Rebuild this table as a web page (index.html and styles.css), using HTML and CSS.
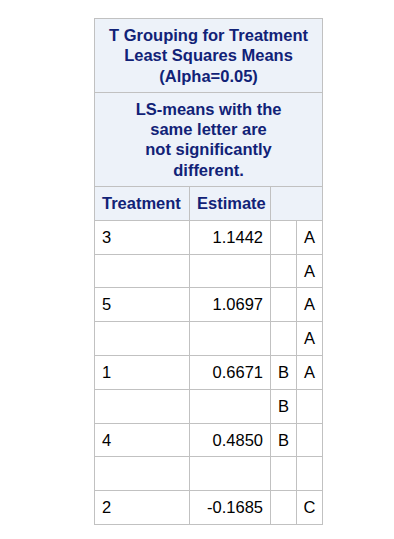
FILE: index.html
```html
<!DOCTYPE html>
<html>
<head>
<meta charset="utf-8">
<link rel="stylesheet" href="styles.css">
</head>
<body>
<table class="grp">
  <colgroup>
    <col class="c1"><col class="c2"><col class="c3"><col class="c4">
  </colgroup>
  <thead>
    <tr><th class="title" colspan="4">T Grouping for Treatment<br>Least Squares Means<br>(Alpha=0.05)</th></tr>
    <tr><th class="title" colspan="4">LS-means with the<br>same letter are<br>not significantly<br>different.</th></tr>
    <tr><th class="hdr">Treatment</th><th class="hdr">Estimate</th><th class="hdr" colspan="2"></th></tr>
  </thead>
  <tbody>
    <tr><td>3</td><td class="num">1.1442</td><td class="let"></td><td class="let">A</td></tr>
    <tr><td></td><td class="num"></td><td class="let"></td><td class="let">A</td></tr>
    <tr><td>5</td><td class="num">1.0697</td><td class="let"></td><td class="let">A</td></tr>
    <tr><td></td><td class="num"></td><td class="let"></td><td class="let">A</td></tr>
    <tr><td>1</td><td class="num">0.6671</td><td class="let">B</td><td class="let">A</td></tr>
    <tr><td></td><td class="num"></td><td class="let">B</td><td class="let"></td></tr>
    <tr><td>4</td><td class="num">0.4850</td><td class="let">B</td><td class="let"></td></tr>
    <tr><td></td><td class="num"></td><td class="let"></td><td class="let"></td></tr>
    <tr><td>2</td><td class="num">-0.1685</td><td class="let"></td><td class="let">C</td></tr>
  </tbody>
</table>
</body>
</html>
```
FILE: styles.css
```css
html, body {
  margin: 0;
  padding: 0;
  background: #ffffff;
}
body {
  font-family: "Liberation Sans", Arial, sans-serif;
  font-size: 16.5px;
}
.grp {
  margin: 18px 0 0 94px;
  border-collapse: collapse;
  table-layout: fixed;
  width: 228px;
}
.c1 { width: 95px; }
.c2 { width: 81px; }
.c3 { width: 26px; }
.c4 { width: 26px; }
.grp th, .grp td {
  border: 1px solid #c1c1c1;
  padding: 6px 7px;
  line-height: 20.8px;
  vertical-align: top;
}
.grp td {
  height: 20.8px;
}
.grp th {
  background: #edf2f9;
  color: #112277;
  font-weight: bold;
}
.grp th.title {
  text-align: center;
  line-height: 20.3px;
}
.grp th.hdr {
  text-align: left;
  height: 20.8px;
}
.grp td {
  color: #000000;
  background: #ffffff;
  text-align: left;
}
.grp td.num {
  text-align: right;
}
.grp td.let {
  text-align: center;
  padding: 6px 0;
}
```
